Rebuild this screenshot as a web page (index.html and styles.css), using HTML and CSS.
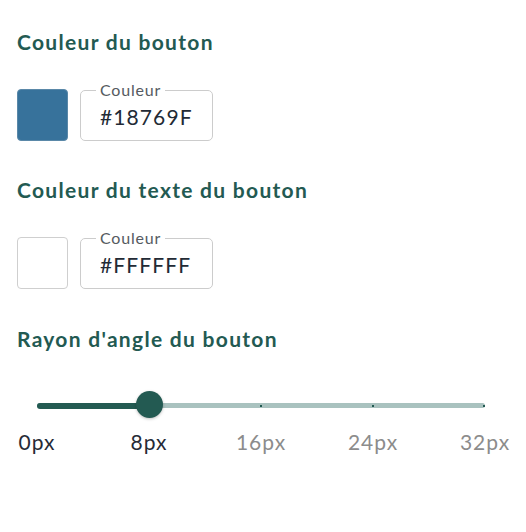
FILE: index.html
```html
<!DOCTYPE html>
<html lang="fr">
<head>
<meta charset="utf-8">
<title>Bouton</title>
<link rel="stylesheet" href="styles.css">
</head>
<body>
<div class="panel">
  <h2 class="title">Couleur du bouton</h2>
  <div class="color-row">
    <div class="swatch swatch-blue"></div>
    <fieldset class="field">
      <legend class="field-label">Couleur</legend>
      <div class="field-value">#18769F</div>
    </fieldset>
  </div>

  <h2 class="title title-gap">Couleur du texte du bouton</h2>
  <div class="color-row">
    <div class="swatch swatch-white"></div>
    <fieldset class="field">
      <legend class="field-label">Couleur</legend>
      <div class="field-value">#FFFFFF</div>
    </fieldset>
  </div>

  <h2 class="title title-gap2">Rayon d'angle du bouton</h2>
  <div class="slider">
    <div class="track">
      <div class="fill" style="width:25%"></div>
      <span class="tick tick-a"></span>
      <span class="tick tick-b"></span>
      <span class="tick tick-c"></span>
      <div class="thumb" style="left:25%"></div>
    </div>
  </div>
  <div class="labels">
    <span class="lbl active"><span>0px</span></span>
    <span class="lbl active"><span>8px</span></span>
    <span class="lbl"><span>16px</span></span>
    <span class="lbl"><span>24px</span></span>
    <span class="lbl"><span>32px</span></span>
  </div>
</div>
</body>
</html>
```

FILE: styles.css
```css
* { box-sizing: border-box; }
html, body { margin: 0; padding: 0; background: #ffffff; }
body { font-family: Lato, "Open Sans", sans-serif; }

.panel {
  padding: 30px 17px 0 17px;
  width: 526px;
}

.title {
  margin: 0;
  font-size: 21px;
  line-height: 24px;
  font-weight: 700;
  color: #235a52;
  letter-spacing: 1.3px;
}
.title-gap { margin-top: 37px; }
.title-gap2 { margin-top: 38px; }

.color-row {
  display: flex;
  align-items: flex-end;
  gap: 12px;
  margin-top: 27px;
}

.swatch {
  width: 51px;
  height: 52px;
  border-radius: 4px;
  border: 1px solid #cfcfcf;
}
.swatch-blue { background: #37729b; border-color: #5a88a8; }
.swatch-white { background: #ffffff; }

.field {
  margin: 0;
  width: 133px;
  padding: 0 19px 11px 19px;
  border: 1px solid #cccccc;
  border-radius: 5px;
  min-width: 0;
}
.field-label {
  padding: 0 4px;
  margin-left: -4px;
  font-size: 16px;
  line-height: 18px;
  color: #555a61;
  letter-spacing: 0.8px;
}
.field-value {
  margin-top: 6px;
  font-size: 21px;
  line-height: 24px;
  color: #222a35;
  letter-spacing: 1.1px;
}

.slider {
  margin: 40px 0 0 20px;
  width: 448px;
  height: 27px;
  display: flex;
  align-items: center;
}
.track {
  position: relative;
  width: 100%;
  height: 5px;
  margin-top: 2px;
  border-radius: 3px;
  background: #a9c2bf;
}
.fill {
  height: 6px;
  margin-top: -0.5px;
  border-radius: 3px;
  background: #235a52;
}
.tick {
  position: absolute;
  top: 1.5px;
  width: 2px;
  height: 2px;
  background: #235a52;
}
.tick-a { left: 223px; }
.tick-b { left: 335px; }
.tick-c { left: 446px; }
.thumb {
  position: absolute;
  top: 50%;
  width: 27px;
  height: 27px;
  margin: -15px 0 0 -13.5px;
  border-radius: 50%;
  background: #235a52;
  box-shadow: 0 1px 3px rgba(0, 0, 0, 0.25);
}

.labels {
  margin: 12px 0 0 20px;
  width: 448px;
  display: flex;
  justify-content: space-between;
}
.lbl {
  width: 0;
  display: flex;
  justify-content: center;
  font-size: 21px;
  line-height: 24px;
  color: #8c8c8c;
  letter-spacing: 1px;
  white-space: nowrap;
}
.lbl.active { color: #262b36; }
```
